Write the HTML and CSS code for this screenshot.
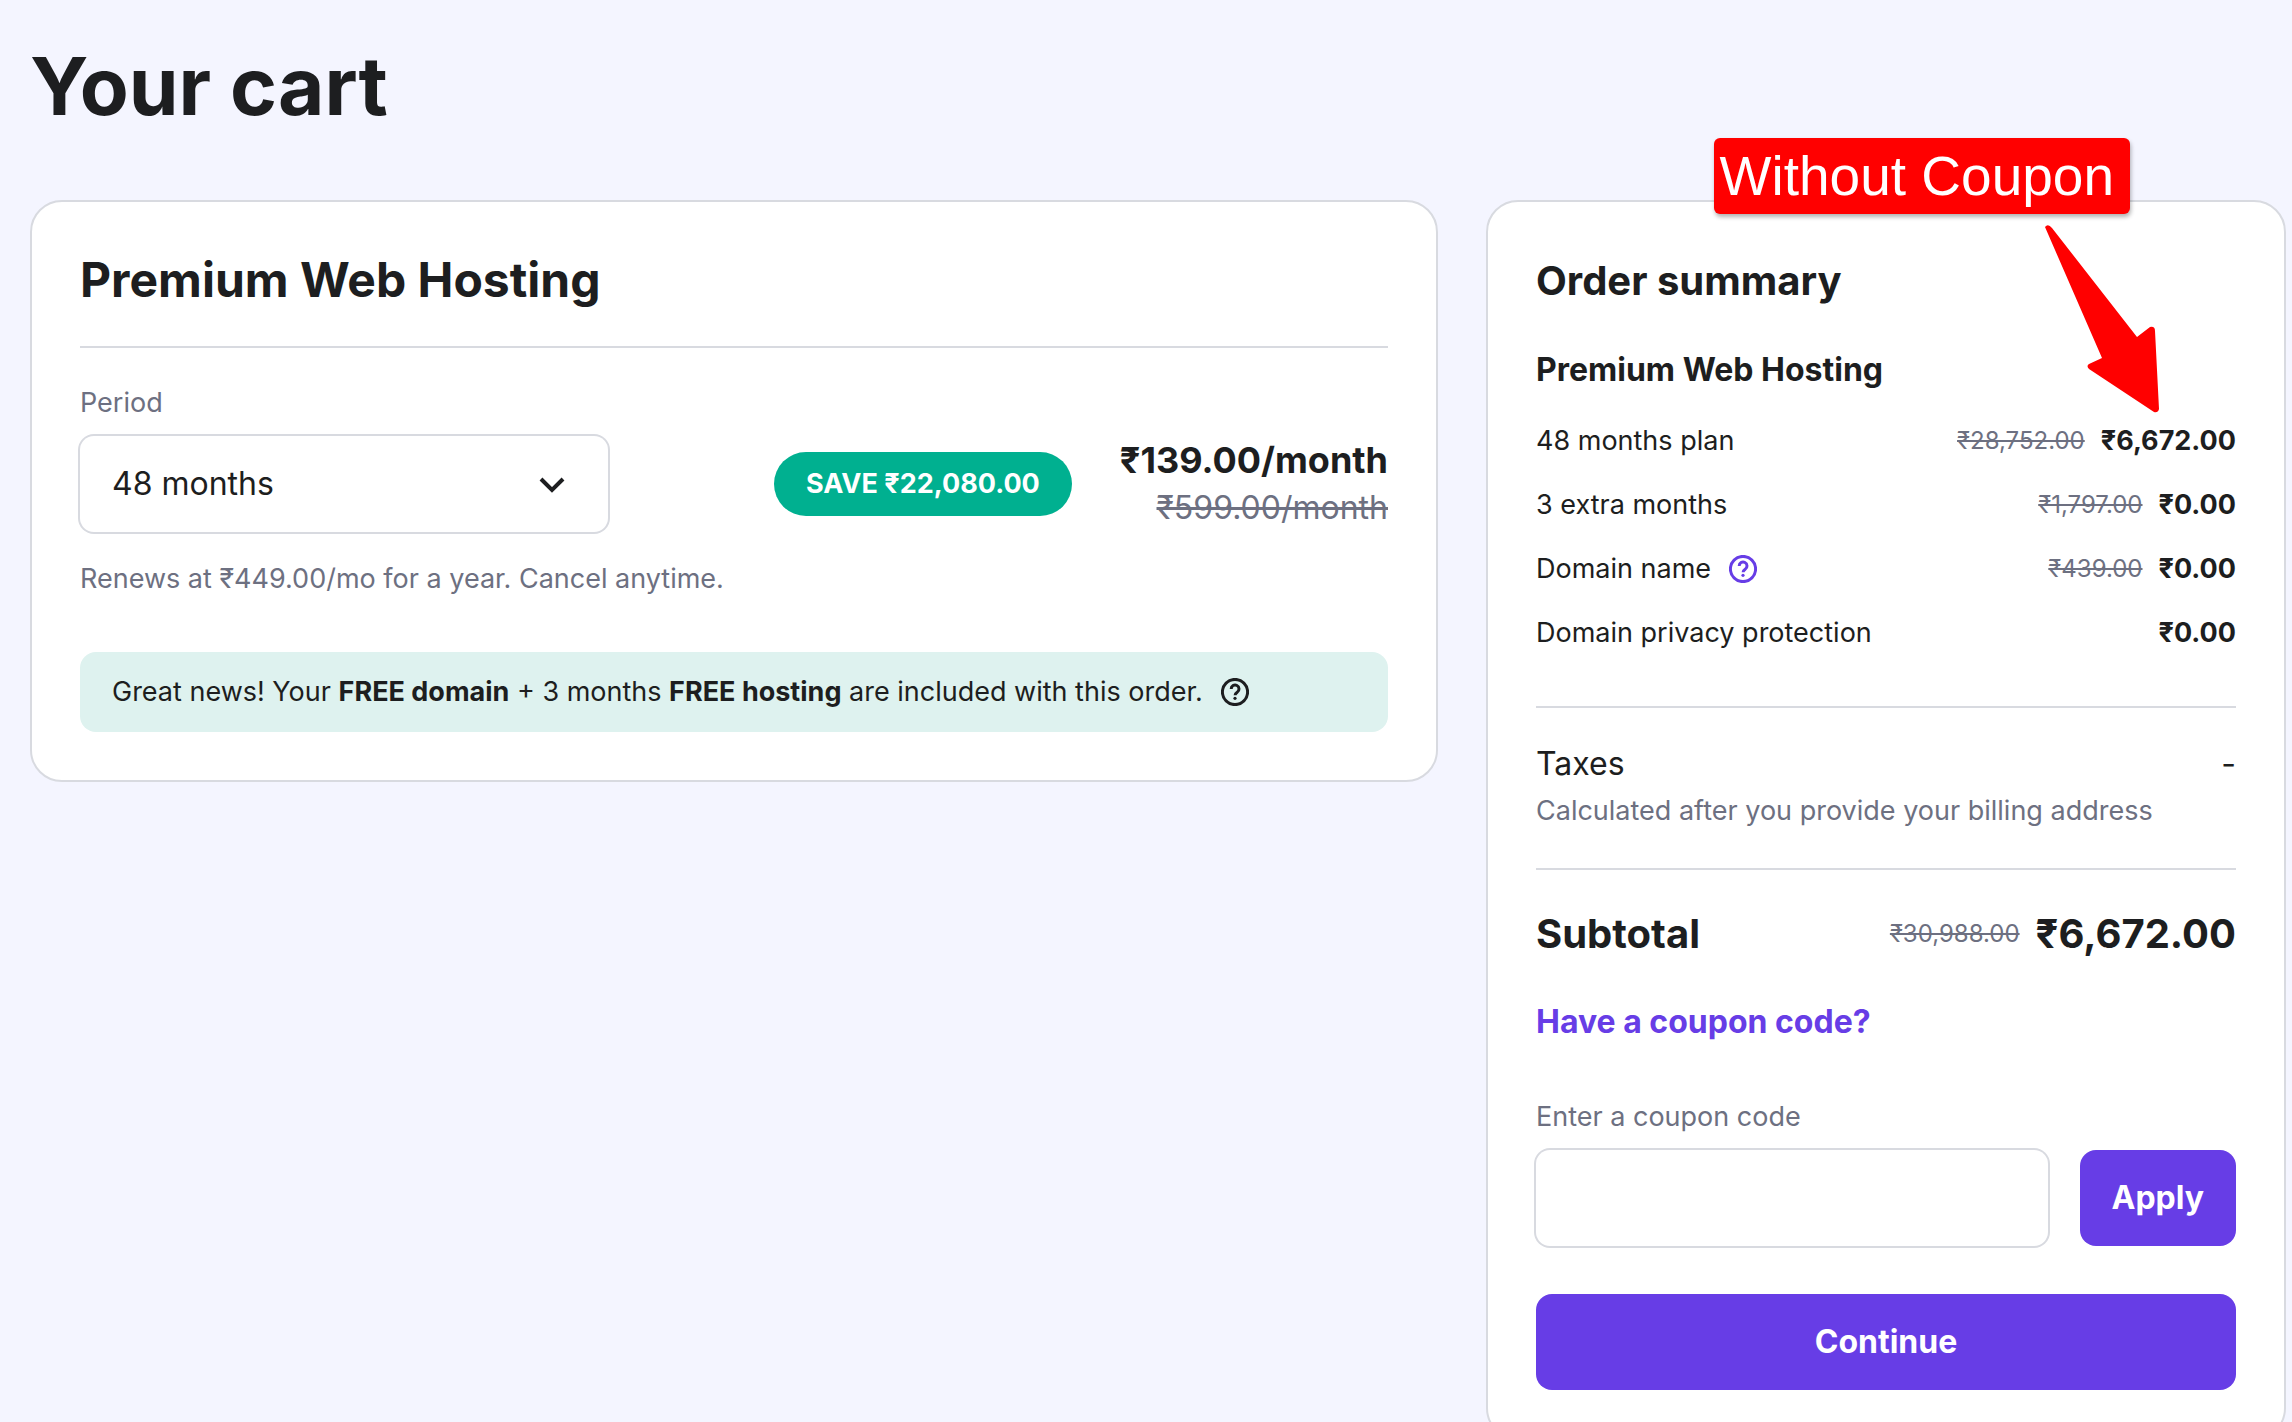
FILE: index.html
```html
<!DOCTYPE html>
<html lang="en">
<head>
  <meta charset="utf-8">
  <title>Your cart</title>
  <link rel="stylesheet" href="styles.css">
</head>
<body>
  <h1>Your cart</h1>
  <main class="cart">
    <section class="card">
      <h2 class="cardTitle">Premium Web Hosting</h2>
      <label class="fieldLabel" for="period">Period</label>
      <div class="periodRow">
        <div class="selectBox">
          <select id="period">
            <option>48 months</option>
            <option>24 months</option>
            <option>12 months</option>
            <option>1 month</option>
          </select>
          <svg class="chevron" viewBox="0 0 28 18" aria-hidden="true">
            <path d="M3 3l11 11L25 3" fill="none" stroke="currentColor" stroke-width="4"/>
          </svg>
        </div>
        <span class="saveBadge">SAVE ₹22,080.00</span>
        <div class="prices">
          <div class="price">₹139.00/month</div>
          <del class="oldPrice">₹599.00/month</del>
        </div>
      </div>
      <p class="renews">Renews at ₹449.00/mo for a year. Cancel anytime.</p>
      <div class="banner">
        <span>Great news! Your <b>FREE domain</b> + 3 months <b>FREE hosting</b> are included with this order.</span>
        <svg class="helpIcon" viewBox="0 0 28 28" aria-hidden="true">
          <circle cx="14" cy="14" r="12.6"/>
          <path d="M10.2 11a3.9 3.9 0 1 1 6 3.200c-1.300 .9-2.100 1.500-2.100 3"/>
          <circle class="dot" cx="14" cy="20.300" r="1.600"/>
        </svg>
      </div>
    </section>

    <aside class="card summary">
      <h2 class="summaryTitle">Order summary</h2>
      <h3>Premium Web Hosting</h3>
      <ul class="items">
        <li><span>48 months plan</span><del>₹28,752.00</del><b>₹6,672.00</b></li>
        <li><span>3 extra months</span><del>₹1,797.00</del><b>₹0.00</b></li>
        <li>
          <span>Domain name
            <svg class="helpIcon purple" viewBox="0 0 28 28" aria-hidden="true">
              <circle cx="14" cy="14" r="12.6"/>
              <path d="M10.2 11a3.9 3.9 0 1 1 6 3.200c-1.300 .9-2.100 1.500-2.100 3"/>
              <circle class="dot" cx="14" cy="20.300" r="1.600"/>
            </svg>
          </span>
          <del>₹439.00</del><b>₹0.00</b>
        </li>
        <li><span>Domain privacy protection</span><b>₹0.00</b></li>
      </ul>
      <div class="taxes">
        <div class="taxRow"><span>Taxes</span><span>-</span></div>
        <p>Calculated after you provide your billing address</p>
      </div>
      <div class="subtotal"><span>Subtotal</span><del>₹30,988.00</del><b>₹6,672.00</b></div>
      <a class="couponLink" href="#coupon">Have a coupon code?</a>
      <label class="fieldLabel" for="coupon">Enter a coupon code</label>
      <div class="couponRow">
        <input type="text" id="coupon" name="coupon">
        <button type="button">Apply</button>
      </div>
      <button type="button" class="continueBtn">Continue</button>

      <div class="callout">Without Coupon</div>
      <svg class="arrow" viewBox="0 0 124 196" aria-hidden="true">
        <path d="M5 5Q8 1 12 6L97 115L110 105Q115 104 115 109L119 187Q118 191 114 190L49 147Q46 144 49 142L62 136Z" fill="#ff0000"/>
      </svg>
    </aside>
  </main>
</body>
</html>
```

FILE: styles.css
```css
* {
  box-sizing: border-box;
}

body {
  margin: 0;
  padding: 38px 6px 0 30px;
  height: 100vh;
  overflow: hidden;
  background-color: #f4f5ff;
  color: #1d1e20;
  font-family: Inter, "Liberation Sans", sans-serif;
  font-size: 27px;
  line-height: 42px;
}

h1 {
  margin: 0 0 66px;
  font-size: 80px;
  line-height: 96px;
}

h2,
h3,
p,
ul {
  margin: 0;
}

b {
  font-weight: 700;
}

.cart {
  display: grid;
  grid-template-columns: 1.76fr 1fr;
  align-items: start;
  gap: 48px;
}

.card {
  position: relative;
  padding: 48px;
  border: 2px solid #d8dae0;
  border-radius: 32px;
  background-color: #fff;
}

.cardTitle {
  padding-bottom: 36px;
  margin-bottom: 34px;
  border-bottom: 2px solid #d8dae0;
  font-size: 48px;
  line-height: 60px;
}

.fieldLabel {
  display: block;
  margin-bottom: 12px;
  color: #6d7081;
}

.periodRow {
  display: flex;
  align-items: center;
  gap: 48px;
}

.selectBox {
  position: relative;
  width: 528px;
  margin-right: auto;
}

select,
input {
  width: 100%;
  height: 96px;
  padding: 0 32px;
  border: none;
  border-radius: 14px;
  box-shadow: 0 0 0 2px #d8dae0;
  background-color: #fff;
  color: #1d1e20;
  font: inherit;
  font-size: 32px;
  appearance: none;
}

.chevron {
  position: absolute;
  right: 42px;
  top: 40px;
  width: 28px;
  height: 18px;
  pointer-events: none;
}

.saveBadge {
  padding: 11px 32px;
  border-radius: 32px;
  background-color: #00b090;
  color: #fff;
  font-weight: 700;
}

.prices {
  text-align: right;
  line-height: 48px;
}

.price {
  font-size: 36px;
  font-weight: 700;
}

.oldPrice {
  display: block;
  font-size: 32px;
}

del {
  color: #6d7081;
}

.renews {
  margin-top: 26px;
  color: #6d7081;
}

.banner {
  display: flex;
  align-items: center;
  gap: 18px;
  margin-top: 52px;
  padding: 19px 32px;
  border-radius: 16px;
  background-color: #def2ef;
}

.helpIcon {
  width: 28px;
  height: 28px;
  fill: none;
  stroke: #1d1e20;
  stroke-width: 3;
}

.helpIcon .dot {
  fill: #1d1e20;
  stroke: none;
}

.purple {
  margin-left: 10px;
  vertical-align: -5px;
  stroke: #673de6;
}

.purple .dot {
  fill: #673de6;
}

.summaryTitle {
  font-size: 40px;
  line-height: 62px;
}

h3 {
  margin: 34px 0 26px;
  font-size: 32px;
  line-height: 48px;
}

.items {
  display: flex;
  flex-direction: column;
  gap: 22px;
  padding: 0 0 52px;
  border-bottom: 2px solid #d8dae0;
  list-style: none;
}

.items li,
.subtotal {
  display: flex;
  align-items: center;
  gap: 16px;
}

.items span,
.subtotal span {
  margin-right: auto;
}

.items del,
.subtotal del {
  font-size: 24px;
  font-weight: 400;
}

.taxes {
  padding: 32px 0 36px;
  border-bottom: 2px solid #d8dae0;
}

.taxRow {
  display: flex;
  justify-content: space-between;
  margin-bottom: 2px;
  font-size: 32px;
  line-height: 48px;
}

.taxes p {
  color: #6d7081;
}

.subtotal {
  margin: 34px 0;
  font-size: 40px;
  font-weight: 700;
  line-height: 60px;
}

.couponLink {
  display: block;
  margin-bottom: 50px;
  color: #673de6;
  font-size: 32px;
  font-weight: 700;
  line-height: 48px;
  text-decoration: none;
}

.couponRow {
  display: flex;
  gap: 32px;
  margin-bottom: 48px;
}

button {
  height: 96px;
  padding: 0 32px;
  border: none;
  border-radius: 16px;
  background-color: #673de6;
  color: #fff;
  font: inherit;
  font-size: 32px;
  font-weight: 700;
}

.continueBtn {
  width: 100%;
}

/* red note over the top edge of the summary card */
.callout {
  position: absolute;
  top: -64px;
  right: 154px;
  padding: 0 16px 0 6px;
  border-radius: 6px;
  background-color: #ff0000;
  box-shadow: 1px 3px 4px rgba(0, 0, 0, 0.3);
  color: #fff;
  font-family: "Liberation Sans", sans-serif;
  font-size: 55px;
  line-height: 76px;
}

.arrow {
  position: absolute;
  top: 20px;
  right: 120px;
  width: 124px;
  height: 196px;
}
```
